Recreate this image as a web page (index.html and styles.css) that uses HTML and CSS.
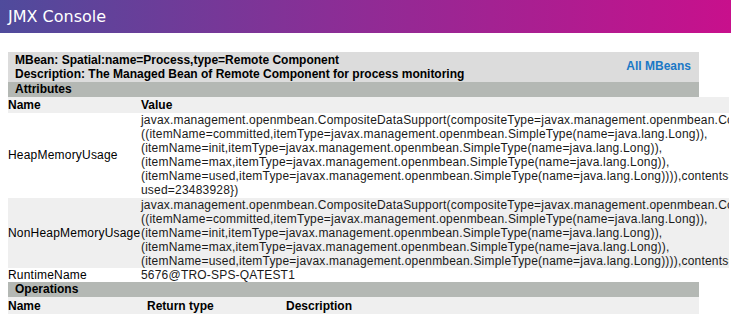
FILE: index.html
```html
<!DOCTYPE html>
<html>
  <head>
    <title>JMX Console</title>
    <link rel="stylesheet" href="styles.css">
  </head>
  <body>
    <div class="header">
      <h1>JMX Console</h1>
    </div>
    <div class="content">
      <table class="mbean-box">
        <tr>
          <td class="mbean-info">
            MBean: Spatial:name=Process,type=Remote Component<br>
            Description: The Managed Bean of Remote Component for process monitoring
          </td>
          <td class="mbean-link"><a href="#">All MBeans</a></td>
        </tr>
      </table>
      <div class="section-title">Attributes</div>
      <div class="attr-wrap">
        <table class="attributes">
          <tr class="head-row">
            <th class="name-col">Name</th>
            <th>Value</th>
          </tr>
          <tr class="heap-row">
            <td class="name-col">HeapMemoryUsage</td>
            <td class="value">javax.management.openmbean.CompositeDataSupport(compositeType=javax.management.openmbean.CompositeType(name=java.lang.management.MemoryUsage,items=(<br>((itemName=committed,itemType=javax.management.openmbean.SimpleType(name=java.lang.Long)),<br>(itemName=init,itemType=javax.management.openmbean.SimpleType(name=java.lang.Long)),<br>(itemName=max,itemType=javax.management.openmbean.SimpleType(name=java.lang.Long)),<br>(itemName=used,itemType=javax.management.openmbean.SimpleType(name=java.lang.Long)))),contents={committed=32112640, init=33554432, max=518979584,<br>used=23483928})</td>
          </tr>
          <tr class="alt">
            <td class="name-col">NonHeapMemoryUsage</td>
            <td class="value">javax.management.openmbean.CompositeDataSupport(compositeType=javax.management.openmbean.CompositeType(name=java.lang.management.MemoryUsage,items=(<br>((itemName=committed,itemType=javax.management.openmbean.SimpleType(name=java.lang.Long)),<br>(itemName=init,itemType=javax.management.openmbean.SimpleType(name=java.lang.Long)),<br>(itemName=max,itemType=javax.management.openmbean.SimpleType(name=java.lang.Long)),<br>(itemName=used,itemType=javax.management.openmbean.SimpleType(name=java.lang.Long)))),contents={committed=28639232, init=24313856, max=136314880, used=28391440})</td>
          </tr>
          <tr>
            <td class="name-col">RuntimeName</td>
            <td class="value">5676@TRO-SPS-QATEST1</td>
          </tr>
        </table>
      </div>
      <div class="section-title">Operations</div>
      <table class="operations">
        <tr>
          <th class="op-col">Name</th>
          <th class="op-col">Return type</th>
          <th>Description</th>
        </tr>
      </table>
    </div>
  </body>
</html>
```

FILE: styles.css
```css
body {
  margin: 0;
  font-family: "Liberation Sans", Arial, sans-serif;
  font-size: 12px;
  color: #000;
  background-color: #fff;
  overflow: hidden;
}

.header {
  height: 33px;
  background: linear-gradient(to right, #4f4b9c, #8a2e96 45%, #c8108c);
  display: flex;
  align-items: center;
  padding-left: 8px;
}

.header h1 {
  margin: 0;
  font-family: "DejaVu Sans", sans-serif;
  font-weight: normal;
  font-size: 16px;
  color: #fff;
}

.content {
  padding: 19px 0 0 8px;
}

table {
  border-collapse: collapse;
  border-spacing: 0;
}

td,
th {
  padding: 0;
  line-height: 14px;
  text-align: left;
  vertical-align: middle;
}

th {
  font-weight: bold;
}

.mbean-box {
  width: 691px;
  background-color: #dcdcdc;
}

.mbean-info {
  padding: 1px 7px;
  font-weight: bold;
}

.mbean-link {
  text-align: right;
  padding-right: 8px;
  padding-bottom: 2px;
}

.mbean-link a {
  color: #1a78c6;
  font-weight: bold;
  text-decoration: none;
}

.section-title {
  width: 684px;
  background-color: #b4b8b4;
  font-weight: bold;
  line-height: 15px;
  padding-left: 7px;
}

.attr-wrap {
  width: 721px;
  overflow: hidden;
}

.attributes {
  width: max-content;
  white-space: nowrap;
}

.attributes td {
  letter-spacing: 0.2px;
}

.attributes .name-col {
  width: 133px;
  min-width: 133px;
}

.head-row th {
  padding: 1px 0;
}

.head-row,
.alt {
  background-color: #efefef;
}

.heap-row td {
  padding-bottom: 1px;
}

.value {
  color: #1a1a1a;
}

.operations {
  width: 691px;
  background-color: #efefef;
}

.operations th {
  padding: 2px 0 1px;
}

.op-col {
  width: 139px;
}
```
